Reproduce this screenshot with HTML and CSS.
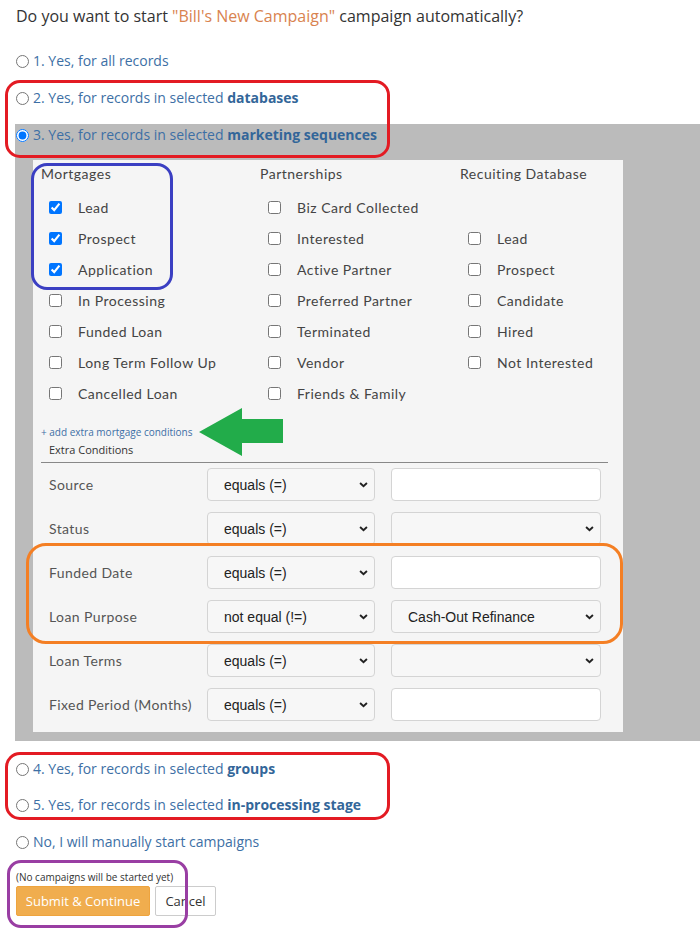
FILE: index.html
```html
<!DOCTYPE html>
<html>
<head>
<meta charset="utf-8">
<link rel="stylesheet" href="styles.css">
</head>
<body>
<div class="page">
  <div class="title">Do you want to start <span class="camp">"Bill's New Campaign"</span> campaign automatically?</div>

  <label class="opt opt1"><input type="radio" name="o"> <span>1. Yes, for all records</span></label>
  <label class="opt opt2"><input type="radio" name="o"> <span>2. Yes, for records in selected <b>databases</b></span></label>

  <div class="grayblock">
    <label class="opt opt3"><input type="radio" name="o" checked> <span>3. Yes, for records in selected <b>marketing sequences</b></span></label>
    <div class="panel">
      <div class="cols">
        <div class="col c1">
          <div class="colhead">Mortgages</div>
          <label class="cb"><input type="checkbox" checked><span>Lead</span></label>
          <label class="cb"><input type="checkbox" checked><span>Prospect</span></label>
          <label class="cb"><input type="checkbox" checked><span>Application</span></label>
          <label class="cb"><input type="checkbox"><span>In Processing</span></label>
          <label class="cb"><input type="checkbox"><span>Funded Loan</span></label>
          <label class="cb"><input type="checkbox"><span>Long Term Follow Up</span></label>
          <label class="cb"><input type="checkbox"><span>Cancelled Loan</span></label>
        </div>
        <div class="col c2">
          <div class="colhead">Partnerships</div>
          <label class="cb"><input type="checkbox"><span>Biz Card Collected</span></label>
          <label class="cb"><input type="checkbox"><span>Interested</span></label>
          <label class="cb"><input type="checkbox"><span>Active Partner</span></label>
          <label class="cb"><input type="checkbox"><span>Preferred Partner</span></label>
          <label class="cb"><input type="checkbox"><span>Terminated</span></label>
          <label class="cb"><input type="checkbox"><span>Vendor</span></label>
          <label class="cb"><input type="checkbox"><span>Friends &amp; Family</span></label>
        </div>
        <div class="col c3">
          <div class="colhead">Recuiting Database</div>
          <div class="cb empty"></div>
          <label class="cb"><input type="checkbox"><span>Lead</span></label>
          <label class="cb"><input type="checkbox"><span>Prospect</span></label>
          <label class="cb"><input type="checkbox"><span>Candidate</span></label>
          <label class="cb"><input type="checkbox"><span>Hired</span></label>
          <label class="cb"><input type="checkbox"><span>Not Interested</span></label>
        </div>
      </div>
      <a class="addlink">+ add extra mortgage conditions</a>
      <div class="extra">Extra Conditions</div>
      <div class="conds">
        <div class="crow">
          <div class="clabel">Source</div>
          <div class="sel w1"><select><option>equals (=)</option></select><svg class="chev" viewBox="0 0 10 7"><path d="M1 1.2 L5 5 L9 1.2" /></svg></div>
          <input class="txt" type="text">
        </div>
        <div class="crow">
          <div class="clabel">Status</div>
          <div class="sel w1"><select><option>equals (=)</option></select><svg class="chev" viewBox="0 0 10 7"><path d="M1 1.2 L5 5 L9 1.2" /></svg></div>
          <div class="sel w2"><select><option></option></select><svg class="chev" viewBox="0 0 10 7"><path d="M1 1.2 L5 5 L9 1.2" /></svg></div>
        </div>
        <div class="crow">
          <div class="clabel">Funded Date</div>
          <div class="sel w1"><select><option>equals (=)</option></select><svg class="chev" viewBox="0 0 10 7"><path d="M1 1.2 L5 5 L9 1.2" /></svg></div>
          <input class="txt" type="text">
        </div>
        <div class="crow">
          <div class="clabel">Loan Purpose</div>
          <div class="sel w1"><select><option>not equal (!=)</option></select><svg class="chev" viewBox="0 0 10 7"><path d="M1 1.2 L5 5 L9 1.2" /></svg></div>
          <div class="sel w2"><select><option>Cash-Out Refinance</option></select><svg class="chev" viewBox="0 0 10 7"><path d="M1 1.2 L5 5 L9 1.2" /></svg></div>
        </div>
        <div class="crow">
          <div class="clabel">Loan Terms</div>
          <div class="sel w1"><select><option>equals (=)</option></select><svg class="chev" viewBox="0 0 10 7"><path d="M1 1.2 L5 5 L9 1.2" /></svg></div>
          <div class="sel w2"><select><option></option></select><svg class="chev" viewBox="0 0 10 7"><path d="M1 1.2 L5 5 L9 1.2" /></svg></div>
        </div>
        <div class="crow">
          <div class="clabel">Fixed Period (Months)</div>
          <div class="sel w1"><select><option>equals (=)</option></select><svg class="chev" viewBox="0 0 10 7"><path d="M1 1.2 L5 5 L9 1.2" /></svg></div>
          <input class="txt" type="text">
        </div>
      </div>
    </div>
  </div>

  <label class="opt opt4"><input type="radio" name="o"> <span>4. Yes, for records in selected <b>groups</b></span></label>
  <label class="opt opt5"><input type="radio" name="o"> <span>5. Yes, for records in selected <b>in-processing stage</b></span></label>
  <label class="opt opt6"><input type="radio" name="o"> <span>No, I will manually start campaigns</span></label>

  <div class="note">(No campaigns will be started yet)</div>
  <div class="buttons">
    <button class="btn submit">Submit &amp; Continue</button>
    <button class="btn cancel">Cancel</button>
  </div>

  <div class="mark red1"></div>
  <div class="mark blue"></div>
  <svg class="arrow" viewBox="0 0 84 48"><polygon points="0,24 43,0 43,11 84,11 84,35 43,35 43,48" /></svg>
  <div class="mark orange"></div>
  <div class="mark red2"></div>
  <div class="mark purple"></div>
</div>
</body>
</html>
```

FILE: styles.css
```css
* { box-sizing: border-box; }
html, body { margin: 0; padding: 0; background: #fff; }
body { font-family: "Open Sans", "Liberation Sans", sans-serif; color: #333; }

.page { position: relative; padding: 0 0 0 15px; width: 700px; height: 940px; overflow: hidden; }

.title { margin: 6px 0 0 1px; font-size: 16px; line-height: 20px; color: #333; }
.camp { color: #d9834f; }

.opt { display: flex; align-items: center; font-size: 14px; line-height: 20px; color: #3d6fa5; height: 20px; }
.opt input { margin: 0 4px 0 1px; width: 13px; height: 13px; }
.opt b { font-weight: 700; color: #336699; }
.opt1 { margin-top: 25px; }
.opt2 { margin-top: 17px; }

.grayblock { margin-top: 16px; background: #bbbbbb; padding: 1px 0 9px 0; }
.opt3 { height: 20px; }
.panel { margin: 15px 0 0 18px; width: 590px; background: #f5f5f5; padding: 5px 15px 11px 8px; }

.cols { display: grid; grid-template-columns: 219px 200px 1fr; font-family: Lato, "Open Sans", sans-serif; font-size: 14px; color: #444; }
.colhead { height: 18px; line-height: 18px; margin-bottom: 9px; letter-spacing: 0.5px; }
.cb { display: flex; align-items: center; height: 31px; letter-spacing: 0.5px; }
.cb input { margin: 0 16px 0 8px; width: 13px; height: 13px; }

.addlink { display: block; margin-top: 16px; font-size: 10px; line-height: 14px; color: #3d6fa5; }
.extra { margin: 4px 0 0 8px; font-size: 11px; line-height: 14px; color: #333; }
.conds { border-top: 1px solid #888; margin-top: 5px; padding-top: 5px; }
.crow { display: flex; align-items: center; height: 33px; margin-bottom: 11px; }
.crow:last-child { margin-bottom: 0; }
.clabel { width: 166px; padding-left: 8px; font-family: Lato, "Open Sans", sans-serif; font-size: 14px; color: #555; letter-spacing: 0.4px; white-space: nowrap; }

.sel { position: relative; height: 33px; }
.sel.w1 { width: 168px; margin-right: 16px; }
.sel.w2 { width: 210px; }
.sel select { -webkit-appearance: none; appearance: none; width: 100%; height: 100%; border: 1px solid #d4d4d4; border-radius: 4px; background: #f7f7f7; font-family: Arial, "Liberation Sans", sans-serif; font-size: 14px; color: #222; padding: 0 0 0 16px; outline: none; }
.chev { position: absolute; right: 7px; top: 14px; width: 9px; height: 6px; fill: none; stroke: #222; stroke-width: 2.2; pointer-events: none; }
.txt { width: 210px; height: 33px; border: 1px solid #d4d4d4; border-radius: 4px; background: #fff; }

.opt4 { margin-top: 18px; }
.opt5 { margin-top: 16px; }
.opt6 { margin-top: 17px; }

.note { margin: 19px 0 0 1px; font-size: 10px; line-height: 12px; color: #333; }
.buttons { display: flex; gap: 5px; margin: 3px 0 0 1px; }
.btn { height: 30px; font-family: "Open Sans", "Liberation Sans", sans-serif; font-size: 13px; border-radius: 2px; padding: 0; white-space: nowrap; text-align: center; }
.submit { width: 134px; background: #f0ad4e; border: 1px solid #eea43e; color: #fff; }
.cancel { width: 61px; background: #fff; border: 1px solid #ccc; color: #333; }

.mark { position: absolute; border-style: solid; border-width: 3px; pointer-events: none; }
.red1 { left: 5px; top: 80px; width: 385px; height: 78px; border-color: #e31b23; border-radius: 15px; }
.blue { left: 31px; top: 163px; width: 142px; height: 127px; border-color: #3b3fc2; border-radius: 16px; }
.orange { left: 26px; top: 543px; width: 597px; height: 101px; border-color: #f47f24; border-width: 3.5px; border-radius: 20px; }
.red2 { left: 5px; top: 752px; width: 385px; height: 68px; border-color: #e31b23; border-radius: 15px; }
.purple { left: 7px; top: 860px; width: 181px; height: 68px; border-color: #993ea3; border-radius: 14px; }
.arrow { position: absolute; left: 199px; top: 408px; width: 84px; height: 48px; fill: #22ac4a; }
```
